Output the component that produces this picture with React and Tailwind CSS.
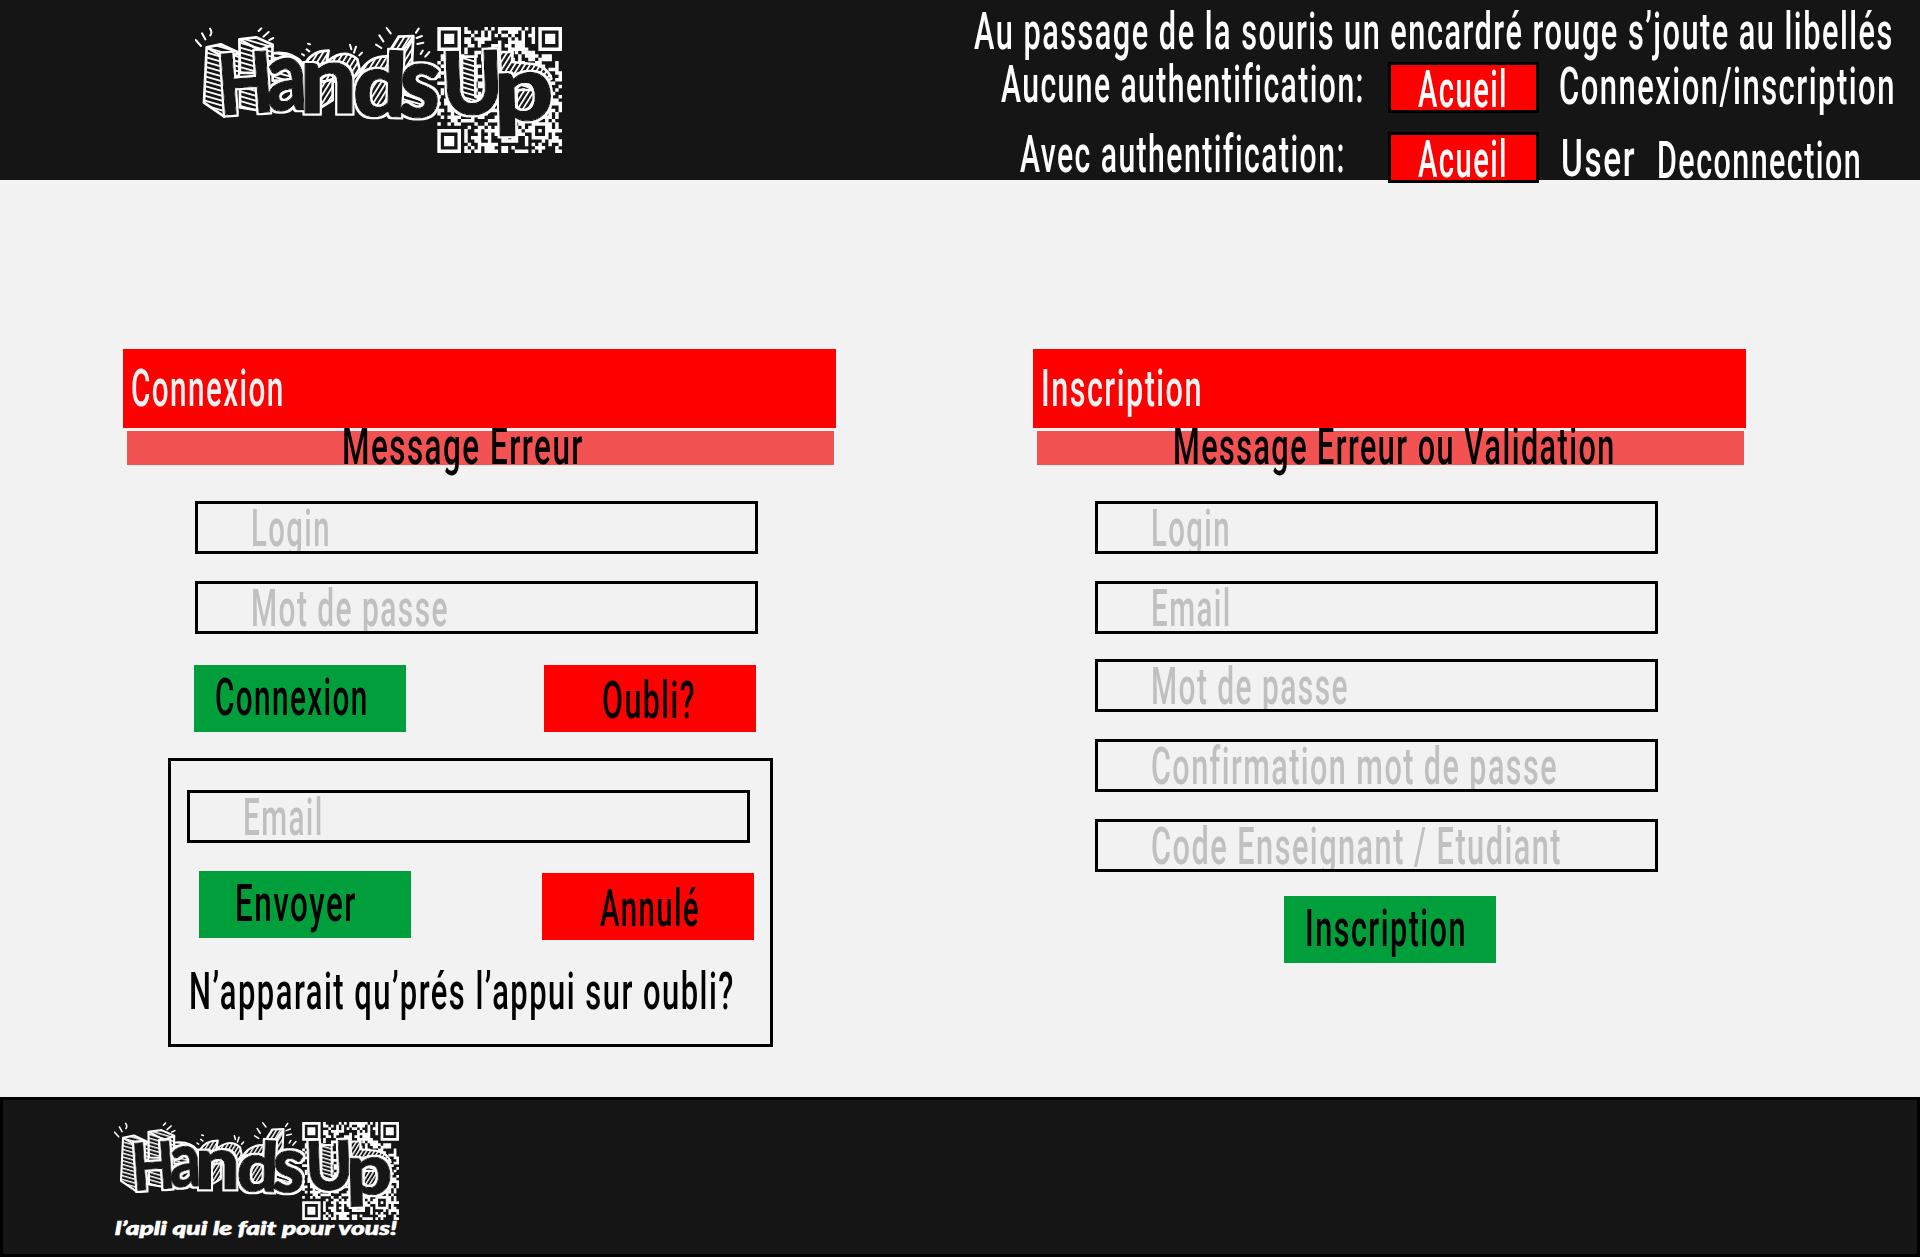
import { useLayoutEffect, useRef } from "react";

// Condenses a line of text so that it fills the width given by its class.
function Fit({ children, className = "" }) {
  const box = useRef(null);
  const inner = useRef(null);
  useLayoutEffect(() => {
    const ratio = box.current.clientWidth / inner.current.offsetWidth;
    inner.current.style.transform = `scaleX(${ratio})`;
  }, [children]);
  return (
    <div ref={box} className={`h-[52px] shrink-0 whitespace-nowrap text-[52px] font-medium leading-[55px] ${className}`}>
      <span ref={inner} className="-ml-px inline-block origin-left tracking-[2.5px]">
        {children}
      </span>
    </div>
  );
}

const N = 37;
function inSquare(x, y, ox, oy, s) {
  return x >= ox && y >= oy && x < ox + s && y < oy + s;
}
function ring(x, y, ox, oy, s) {
  const d = Math.min(x - ox, y - oy, ox + s - 1 - x, oy + s - 1 - y);
  return d !== 1;
}
function moduleOn(x, y) {
  for (const [ox, oy] of [[0, 0], [N - 7, 0], [0, N - 7]]) {
    if (inSquare(x, y, ox, oy, 7)) return ring(x, y, ox, oy, 7);
    if (inSquare(x, y, ox - 1, oy - 1, 9)) return false;
  }
  if (inSquare(x, y, 28, 28, 5)) return ring(x, y, 28, 28, 5);
  let h = (x * 374761393 + y * 668265263 + 1442695) | 0;
  h = Math.imul(h ^ (h >>> 13), 1274126177);
  h ^= h >>> 16;
  return (h & 255) < 138;
}
let qrPath = "";
for (let y = 0; y < N; y++)
  for (let x = 0; x < N; x++) if (moduleOn(x, y)) qrPath += `M${x} ${y}h1.03v1.03h-1.03z`;

const letters = [
  ["H", 120, 316, 252, 166, -4],
  ["a", 262, 302, 296, 122, -2],
  ["n", 358, 308, 284, 174, 0],
  ["d", 516, 316, 266, 162, 2],
  ["s", 652, 318, 306, 126, 3],
  ["U", 788, 316, 262, 184, -2],
  ["p", 942, 332, 272, 180, -1],
];

function Logo({ id, className }) {
  const hatch = `url(#${id})`;
  const hatchUp = `url(#${id}-up)`;
  return (
    <svg viewBox="45 51 1101 378" className={className} role="img" aria-label="Hands Up">
      <defs>
        <pattern id={id} width="14" height="14" patternUnits="userSpaceOnUse" patternTransform="rotate(16)">
          <rect width="14" height="14" fill="#151515" />
          <rect width="14" height="5.5" fill="#fff" />
        </pattern>
        <pattern id={`${id}-up`} width="13" height="13" patternUnits="userSpaceOnUse" patternTransform="rotate(-58)">
          <rect width="13" height="13" fill="#151515" />
          <rect width="13" height="5.5" fill="#fff" />
        </pattern>
        <filter id={`${id}-outline`} x="-5%" y="-10%" width="110%" height="120%">
          <feMorphology in="SourceAlpha" operator="dilate" radius="6" result="grown" />
          <feFlood floodColor="#fff" />
          <feComposite in2="grown" operator="in" />
          <feMerge>
            <feMergeNode />
            <feMergeNode in="SourceGraphic" />
          </feMerge>
        </filter>
      </defs>
      <g transform="translate(772 51) scale(10.1 10.21)">
        <path d={qrPath} fill="#fff" />
      </g>
      <g stroke="#fff" strokeWidth="6" strokeLinecap="round" fill="none">
        <path d="M47 90l16 18M66 70l10 18M90 56q8 10 1 20M244 55l-8 8M266 66l-16 14M280 84l-12 6M390 103l-6 -2M380 118l8 6M366 132l6 4M510 104l4 14M528 110l-6 18M546 128l-8 8M620 54l12 16M598 76l12 18M588 104l16 10M716 56l-8 12M726 78l-16 6M730 98l-18 4M748 126l-12 14M728 122l-6 10" />
      </g>
      <g stroke="#fff" strokeWidth="8" strokeLinejoin="round">
        <path fill={hatch} d="M80 112L122 103 180 130 178 190 133 320 72 278Z" />
        <path fill="none" d="M80 112L133 142 180 130" />
        <path fill={hatch} d="M178 88L228 82 278 104 276 150 240 190 180 188Z" />
        <path fill="none" d="M178 88L238 120 278 104" />
        <path fill={hatch} d="M180 226L240 215V302L180 292Z" />
        <path fill={hatch} d="M278 130q60 -8 92 32l-20 50h-72z" />
        <path fill={hatchUp} d="M376 160q22 -38 70 -38l-6 34q52 -44 92 -8l8 36 -30 30h-120z" />
        <path fill={hatchUp} d="M420 218l38 -10v62l-38 24z" />
        <path fill={hatchUp} d="M540 186q30 -52 92 -46l-10 150 -60 0z" />
        <path fill={hatchUp} d="M630 122L656 80 700 78 696 160 664 184Z" />
        <path fill="none" d="M632 122L668 124 700 80" />
        <path fill={hatch} d="M664 250l66 22 -8 26 -56 -14z" />
        <path fill={hatch} d="M846 140h40v120l34 14 -42 14 -32 -20z" />
        <path fill={hatchUp} d="M958 126h40l-2 30 62 6q44 8 56 44l-50 30 -100 -30z" />
        <path fill={hatchUp} d="M1010 240h54v64h-54z" />
      </g>
      <g
        fontFamily="Lato, sans-serif"
        fontWeight="900"
        fill="#151515"
        stroke="#151515"
        strokeWidth="4"
        strokeLinejoin="round"
        filter={`url(#${id}-outline)`}
      >
        {letters.map(([c, x, y, size, w, r]) => (
          <text key={c} x={x} y={y} fontSize={size} textLength={w} lengthAdjust="spacingAndGlyphs" transform={`rotate(${r} ${x} ${y})`}>
            {c}
          </text>
        ))}
      </g>
    </svg>
  );
}

function Field({ children, className = "", width }) {
  return (
    <div className={`flex h-[53px] w-[563px] shrink-0 overflow-hidden border-[3px] border-black pl-[54px] text-[#c0c0c0] ${className}`}>
      <Fit className={`-mt-[3px] ${width}`}>{children}</Fit>
    </div>
  );
}

function Button({ children, className }) {
  return <button className={`flex h-[67px] w-[212px] shrink-0 items-start text-left ${className}`}>{children}</button>;
}

function Panel({ title, titleWidth, message, messageClass, children, className }) {
  return (
    <section className={`w-[713px] shrink-0 ${className}`}>
      <h2 className="relative z-10 flex h-[79px] bg-[#ff0000] pl-[9px] pt-[12px] text-[#f2f2f2]">
        <Fit className={titleWidth}>{title}</Fit>
      </h2>
      <div className="ml-1 mt-[3px] flex h-[34px] w-[707px] bg-[#f25252]">
        <Fit className={`-mt-3 ${messageClass}`}>{message}</Fit>
      </div>
      {children}
    </section>
  );
}

function HomeTab() {
  return (
    <div className="ml-auto flex h-[51px] w-[151px] shrink-0 border-[3px] border-black bg-[#ff0000] pl-[28px]">
      <Fit className="-mt-[3px] w-[90px]">Acueil</Fit>
    </div>
  );
}

export default function App() {
  return (
    <div className="flex h-[1257px] w-[1920px] flex-col overflow-hidden bg-[#f2f2f2] font-['Roboto',sans-serif] text-black">
      <header className="flex h-[180px] shrink-0 bg-[#151515] text-white">
        <Logo id="hatch-top" className="ml-[195px] mt-[27px] h-[126px] w-[367px] shrink-0" />
        <div className="ml-[413px] w-[922px] shrink-0">
          <div className="flex h-[62px] pt-[4px]">
            <Fit className="w-[920px]">Au passage de la souris un encardré rouge s’joute au libellés</Fit>
          </div>
          <nav className="flex h-[51px] items-start">
            <div className="flex w-[564px] shrink-0">
              <Fit className="-mt-[5px] ml-[27px] w-[364px]">Aucune authentification:</Fit>
              <HomeTab />
            </div>
            <Fit className="-mt-[3px] ml-[21px] w-[337px]">Connexion/inscription</Fit>
          </nav>
          <nav className="mt-[19px] flex h-[51px] items-start">
            <div className="flex w-[564px] shrink-0">
              <Fit className="-mt-[5px] ml-[46px] w-[326px]">Avec authentification:</Fit>
              <HomeTab />
            </div>
            <Fit className="-mt-[1px] ml-[23px] w-[75px]">User</Fit>
            <Fit className="ml-[21px] mt-[1px] w-[205px]">Deconnection</Fit>
          </nav>
        </div>
      </header>

      <main className="flex h-[917px] shrink-0 items-start pt-[169px]">
        <Panel title="Connexion" titleWidth="w-[154px]" message="Message Erreur" messageClass="ml-[216px] w-[242px]" className="ml-[123px]">
          <Field className="ml-[72px] mt-[36px]" width="w-[80px]">Login</Field>
          <Field className="ml-[72px] mt-[27px]" width="w-[198px]">Mot de passe</Field>
          <div className="ml-[71px] mt-[31px] flex w-[562px] justify-between">
            <Button className="bg-[#009f3c] pl-[22px] pt-[5px]"><Fit className="w-[154px]">Connexion</Fit></Button>
            <Button className="bg-[#ff0000] pl-[59px] pt-[8px]"><Fit className="w-[94px]">Oubli?</Fit></Button>
          </div>
          <div className="ml-[45px] mt-[26px] h-[289px] w-[605px] border-[3px] border-black pt-[29px]">
            <Field className="ml-[16px]" width="w-[81px]">Email</Field>
            <div className="ml-[28px] mt-[28px] flex w-[555px] items-start justify-between">
              <Button className="bg-[#009f3c] pl-[37px] pt-[5px]"><Fit className="w-[122px]">Envoyer</Fit></Button>
              <Button className="mt-[2px] bg-[#ff0000] pl-[59px] pt-[8px]"><Fit className="w-[100px]">Annulé</Fit></Button>
            </div>
            <Fit className="ml-[19px] mt-[24px] w-[546px]">N’apparait qu’prés l’appui sur oubli?</Fit>
          </div>
        </Panel>

        <Panel title="Inscription" titleWidth="w-[162px]" message="Message Erreur ou Validation" messageClass="ml-[137px] w-[443px]" className="ml-[197px]">
          <Field className="ml-[62px] mt-[36px]" width="w-[80px]">Login</Field>
          <Field className="ml-[62px] mt-[27px]" width="w-[81px]">Email</Field>
          <Field className="ml-[62px] mt-[25px]" width="w-[198px]">Mot de passe</Field>
          <Field className="ml-[62px] mt-[27px]" width="w-[407px]">Confirmation mot de passe</Field>
          <Field className="ml-[62px] mt-[27px]" width="w-[411px]">Code Enseignant / Etudiant</Field>
          <Button className="ml-[251px] mt-[24px] bg-[#009f3c] pl-[22px] pt-[5px]"><Fit className="w-[162px]">Inscription</Fit></Button>
        </Panel>
      </main>

      <footer className="h-[160px] shrink-0 border-[3px] border-black bg-[#151515] pl-[111px] pt-[22px] text-white">
        <Logo id="hatch-foot" className="h-[98px] w-[285px]" />
        <svg viewBox="0 0 285 24" className="h-[24px] w-[285px]">
          <text x="1" y="15" fontFamily="Lato, sans-serif" fontStyle="italic" fontWeight="900" fontSize="18" textLength="282" lengthAdjust="spacingAndGlyphs" fill="#fff" stroke="#fff" strokeWidth="0.6">
            l’apli qui le fait pour vous!
          </text>
        </svg>
      </footer>
    </div>
  );
}
